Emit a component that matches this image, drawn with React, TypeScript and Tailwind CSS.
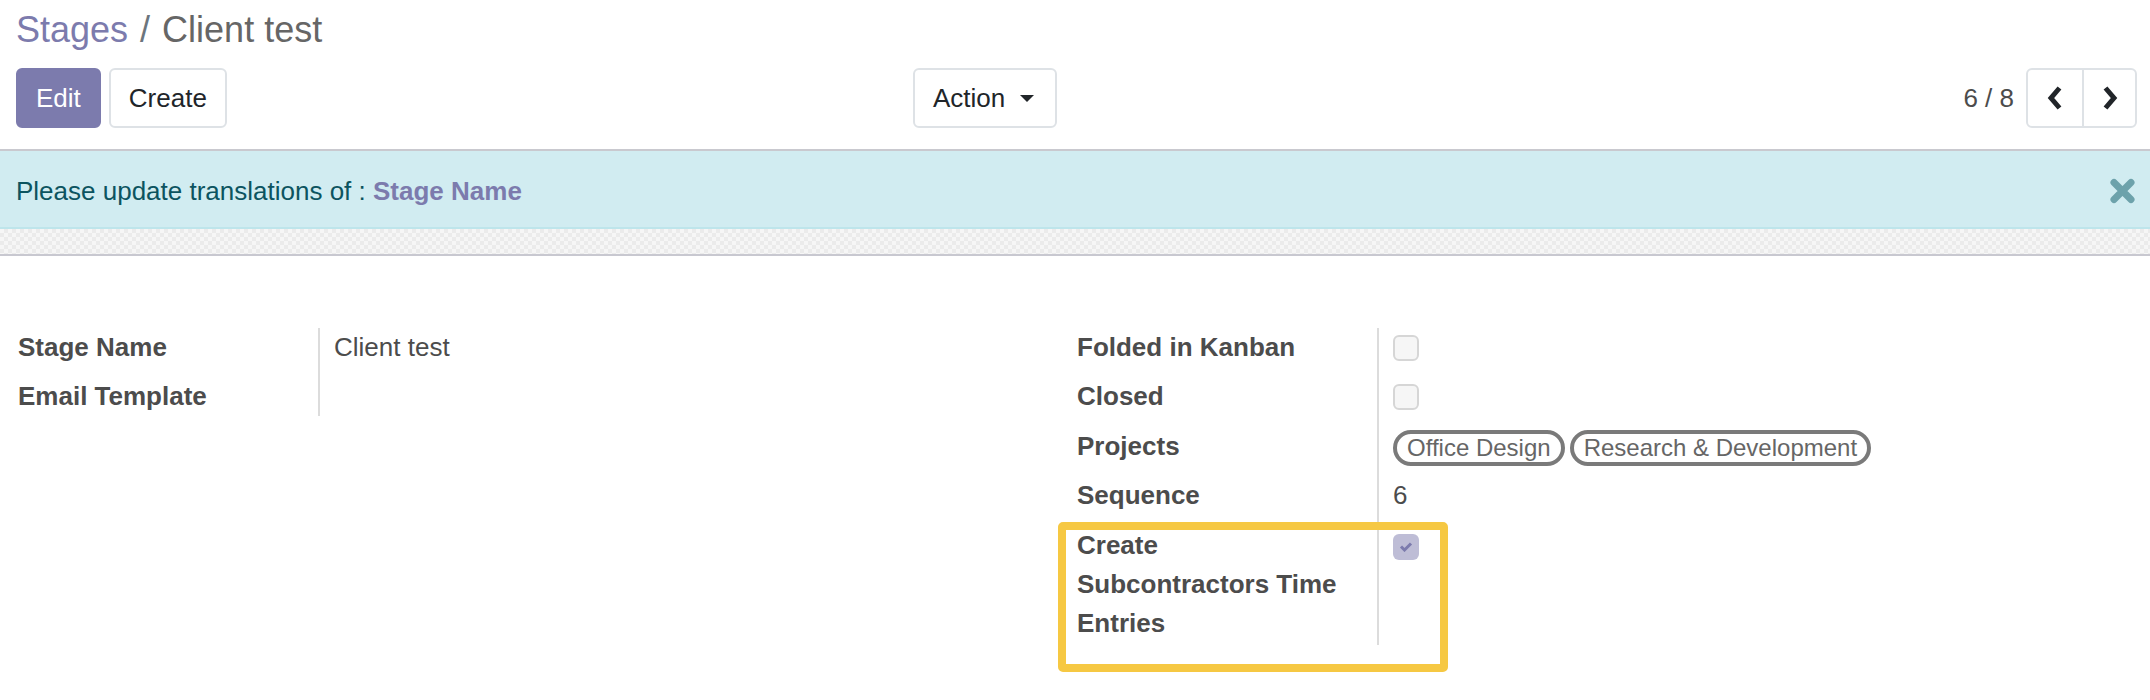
import React from 'react';

const labelCls = 'box-border w-[302px] pr-[30px] border-r-2 border-[#dcdcdc] font-bold leading-[39px]';
const valueCls = 'pl-[14px] leading-[39px]';

function Checkbox({ checked = false, top }: { checked?: boolean; top: string }) {
    if (checked) {
        return (
            <div className={`${top} flex h-[26px] w-[26px] items-center justify-center rounded-[6px] bg-[#bebdd6]`}>
                <svg width="14" height="11" viewBox="0 0 14 11">
                    <path d="M2 5.5 L5.5 9 L12 2.5" fill="none" stroke="#7c7bad" strokeWidth="3" />
                </svg>
            </div>
        );
    }
    return <div className={`${top} box-border h-[26px] w-[26px] rounded-[6px] border-2 border-[#d6d6d6] bg-[#f6f6f6]`} />;
}

function Tag({ children }: { children: React.ReactNode }) {
    return (
        <span className="box-border inline-flex h-[36px] items-center rounded-full border-[4px] border-[#7a7a7a] px-[10px] text-[24px] leading-[28px] text-[#666]">
            {children}
        </span>
    );
}

function Chevron({ dir }: { dir: 'left' | 'right' }) {
    const pts = dir === 'left' ? '12.5,2 4,12 12.5,22' : '3.5,2 12,12 3.5,22';
    return (
        <svg width="16" height="24" viewBox="0 0 16 24">
            <polyline points={pts} fill="none" stroke="#212529" strokeWidth="5" strokeLinejoin="miter" />
        </svg>
    );
}

export default function App() {
    return (
        <div className="relative min-h-[700px] bg-white font-['Liberation_Sans',Arial,sans-serif] text-[26px] text-[#4c4c4c]">
            {/* Control panel */}
            <div className="border-b-2 border-[#c9c9cf] pb-[21px] pl-[16px] pr-[13px]">
                <div className="flex items-baseline pt-[9px] text-[36px] leading-[42px]">
                    <span className="text-[#7c7bad]">Stages</span>
                    <span className="mx-[12px] text-[#6c757d]">/</span>
                    <span className="text-[#666]">Client test</span>
                </div>

                <div className="mt-[17px] flex h-[60px] items-center">
                    <div className="flex w-[897px] items-center">
                        <button className="box-border h-[60px] rounded-[6px] border-2 border-[#7c7bad] bg-[#7c7bad] px-[18px] text-white">
                            Edit
                        </button>
                        <button className="ml-[8px] box-border h-[60px] rounded-[6px] border-2 border-[#dee2e6] bg-white px-[18px] text-[#212529]">
                            Create
                        </button>
                    </div>
                    <button className="box-border flex h-[60px] items-center rounded-[6px] border-2 border-[#dee2e6] bg-white pl-[18px] pr-[21px] text-[#212529]">
                        Action
                        <span className="ml-[15px] h-0 w-0 border-x-[7px] border-t-[7px] border-x-transparent border-t-[#212529]" />
                    </button>
                    <div className="ml-auto flex items-center">
                        <span className="mr-[12px] text-[#4c4c4c]">6 / 8</span>
                        <div className="box-border flex h-[60px] rounded-[6px] border-2 border-[#dee2e6]">
                            <button className="flex w-[54px] items-center justify-center">
                                <Chevron dir="left" />
                            </button>
                            <button className="flex w-[53px] items-center justify-center border-l-2 border-[#dee2e6]">
                                <Chevron dir="right" />
                            </button>
                        </div>
                    </div>
                </div>
            </div>

            {/* Translation alert */}
            <div className="box-border flex h-[78px] items-start border-b-2 border-[#bee5eb] bg-[#d1ecf1] pl-[16px] pr-[14px] pt-[25px] text-[#0c5460]">
                <p className="leading-[30px]">
                    Please update translations of : <span className="font-bold text-[#7c7bad]">Stage Name</span>
                </p>
                <svg className="ml-auto mt-[2px]" width="27" height="26" viewBox="0 0 27 26">
                    <path d="M5 4.5 L22 21.5 M22 4.5 L5 21.5" stroke="#6da2ab" strokeWidth="7" strokeLinecap="round" />
                </svg>
            </div>

            {/* Sheet background band */}
            <div className="h-[27px] border-b-2 border-[#c8c8d0] bg-[#f3f3f3] bg-[image:repeating-conic-gradient(#ebebeb_0%_25%,#f6f6f6_0%_50%)] bg-size-[8px_8px]" />

            {/* Form */}
            <div className="mt-[72px] grid grid-cols-2 pl-[18px] pr-[14px]">
                <div className="grid grid-cols-[302px_1fr] content-start">
                    <div className={`${labelCls} pb-[10.4px]`}>Stage Name</div>
                    <div className={`${valueCls} pb-[10.4px]`}>Client test</div>
                    <div className={labelCls}>Email Template</div>
                    <div className={valueCls} />
                </div>

                <div className="grid grid-cols-[302px_1fr] content-start">
                    <div className={`${labelCls} pb-[10.4px]`}>Folded in Kanban</div>
                    <div className={`${valueCls} pb-[10.4px]`}>
                        <Checkbox top="mt-[7px]" />
                    </div>
                    <div className={`${labelCls} pb-[10.4px]`}>Closed</div>
                    <div className={`${valueCls} pb-[10.4px]`}>
                        <Checkbox top="mt-[7px]" />
                    </div>
                    <div className={`${labelCls} pb-[10.4px]`}>Projects</div>
                    <div className={`${valueCls} pb-[10.4px]`}>
                        <div className="mt-[3px] flex gap-[5px]">
                            <Tag>Office Design</Tag>
                            <Tag>Research &amp; Development</Tag>
                        </div>
                    </div>
                    <div className={`${labelCls} pb-[10.4px]`}>Sequence</div>
                    <div className={`${valueCls} pb-[10.4px]`}>6</div>
                    <div className={`${labelCls} pb-[2px]`}>Create Subcontractors Time Entries</div>
                    <div className={valueCls}>
                        <Checkbox checked top="mt-[8px]" />
                    </div>
                </div>
            </div>

            {/* Highlight annotation */}
            <div className="pointer-events-none absolute left-[1058px] top-[522px] box-border h-[150px] w-[390px] rounded-[5px] border-[8px] border-[#f6c843]" />
        </div>
    );
}
